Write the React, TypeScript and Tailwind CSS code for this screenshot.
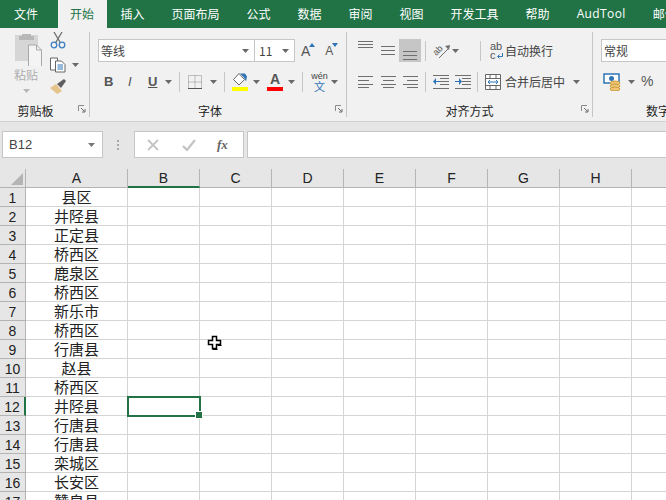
import React from "react";

const CJK = '"Noto Sans CJK SC", "Liberation Sans", sans-serif';

const Caret = ({ c = "#6a6a6a", className = "" }: { c?: string; className?: string }) => (
  <svg width="7" height="4" viewBox="0 0 7 4" className={className}><path d="M0 0h7L3.5 4z" fill={c} /></svg>
);

const Launcher = () => (
  <svg width="8" height="8" viewBox="0 0 8 8" className="absolute right-[3px] bottom-[4px]">
    <path d="M.5 6V.5H6" stroke="#8a8a8a" fill="none" />
    <path d="M3 3l3.5 3.5M7 4v3H4" stroke="#6a6a6a" fill="none" />
  </svg>
);

const Lines = ({ ys, x }: { ys: number[]; x: [number, number][] }) => (
  <svg width="16" height="16" viewBox="0 0 16 16">
    {ys.map((y, i) => (
      <path key={i} d={`M${x[i][0]} ${y + 0.5}H${x[i][1]}`} stroke="#6f6f6f" />
    ))}
  </svg>
);

const tabs = ["文件", "开始", "插入", "页面布局", "公式", "数据", "审阅", "视图", "开发工具", "帮助", "AudTool", "邮件"];

function TabBar() {
  return (
    <div className="flex h-[28px] bg-[#217346] text-[12px] leading-[28px] text-white overflow-hidden whitespace-nowrap">
      {tabs.map((t, i) =>
        i === 0 ? (
          <div key={t} className="shrink-0 w-[58px] pl-[14px]">{t}</div>
        ) : i === 1 ? (
          <div key={t} className="shrink-0 w-[49px] pl-[12px] bg-[#f1f1f1] text-[#217346]">{t}</div>
        ) : t === "AudTool" ? (
          <div key={t} className="shrink-0 px-[13.5px] tracking-[0.4px]" style={{ fontFamily: '"Open Sans", sans-serif' }}>{t}</div>
        ) : (
          <div key={t} className="shrink-0 px-[13.5px]">{t}</div>
        )
      )}
    </div>
  );
}

function Clipboard() {
  return (
    <div className="relative w-[90px] h-[85px] mt-[4px] border-r border-[#c6c6c6] shrink-0">
      <div className="flex">
        <div className="ml-[14px] w-[28px] flex flex-col items-start">
          <svg width="29" height="34" viewBox="0 0 29 34">
            <path d="M1 3h23v26H1z" fill="#d6d6d6" />
            <path d="M8 2h9v2h3v4H5V4h3z" fill="#b8b8b8" />
            <path d="M14.500 13h8l5 5v17h-13z" fill="#f4f4f4" stroke="#a8a8a8" />
            <path d="M22.500 13v5h5" fill="none" stroke="#a8a8a8" />
          </svg>
          <span className="text-[12px] leading-[14px] text-[#adadad] mt-[2px]">粘贴</span>
          <Caret c="#b8b8b8" className="ml-[9px] mt-[7px]" />
        </div>
        <div className="ml-[8px] flex flex-col">
          <svg width="16" height="17" viewBox="0 0 16 17">
            <path d="M4 0l6.500 11M12 0L5.500 11" stroke="#6f6f6f" strokeWidth="1.300" fill="none" />
            <circle cx="4" cy="13" r="2.800" stroke="#3f7fbf" strokeWidth="1.300" fill="none" />
            <circle cx="12" cy="13" r="2.800" stroke="#3f7fbf" strokeWidth="1.300" fill="none" />
          </svg>
          <div className="flex items-center mt-[8px]">
            <svg width="16" height="16" viewBox="0 0 16 16">
              <path d="M.5 1h7v12h-7z" fill="#fff" stroke="#666" />
              <path d="M5.500 4h6l3.500 3.500V15h-9.500z" fill="#fff" stroke="#666" />
              <path d="M7.500 8h5.500M7.500 10h5.500M7.500 12h5.500" stroke="#2f74b5" />
            </svg>
            <Caret className="ml-[6px]" />
          </div>
          <svg width="17" height="16" viewBox="0 0 17 16" className="mt-[6px]">
            <path d="M0 9l6-4 6 7-5 3q-3-3-7-6z" fill="#e5c48a" />
            <path d="M7 5l7-5 2 2-5 7z" fill="#5f5f5f" />
          </svg>
        </div>
      </div>
      <div className="absolute left-0 right-[18px] top-[71px] text-center text-[12px] leading-[16px] text-[#222]">剪贴板</div>
      <Launcher />
    </div>
  );
}

function FontGroup() {
  return (
    <div className="relative w-[257px] h-[85px] mt-[4px] border-r border-[#c6c6c6] shrink-0">
      <div className="flex mt-[7px] ml-[8px] h-[23px] items-center">
        <div className="flex items-center w-[157px] h-[23px] bg-white border border-[#c6c6c6] text-[12px] text-[#444] pl-[2px]">
          等线
          <Caret className="ml-auto mr-[5px]" />
        </div>
        <div className="flex items-center w-[40px] h-[23px] bg-white border border-l-0 border-[#c6c6c6] text-[12px] text-[#444] pl-[4px]">
          11
          <Caret className="ml-auto mr-[5px]" />
        </div>
        <span className="relative ml-[6px] text-[14px] leading-[16px] text-[#555]" style={{ fontFamily: '"Liberation Sans", sans-serif' }}>
          A
          <svg width="6" height="4" viewBox="0 0 6 4" className="absolute -right-[5px] top-0"><path d="M0 4h6L3 0z" fill="#2f74b5" /></svg>
        </span>
        <span className="relative ml-[15px] text-[12px] leading-[16px] text-[#555]" style={{ fontFamily: '"Liberation Sans", sans-serif' }}>
          A
          <svg width="6" height="4" viewBox="0 0 6 4" className="absolute -right-[5px] top-0"><path d="M0 0h6L3 4z" fill="#2f74b5" /></svg>
        </span>
      </div>
      <div className="flex items-center mt-[8px] h-[23px] ml-[14px] text-[#555]" style={{ fontFamily: '"Liberation Sans", sans-serif' }}>
        <span className="w-[24px] text-[13px] font-bold">B</span>
        <span className="w-[20px] text-[13px] italic">I</span>
        <span className="w-[17px] text-[13px] underline font-bold">U</span>
        <Caret />
        <div className="w-px h-[20px] bg-[#c6c6c6] ml-[7px]" />
        <svg width="14" height="14" viewBox="0 0 14 14" className="ml-[8px]">
          <path d="M.5.500h13v13h-13zM7 .5v13M.5 7h13" stroke="#8a8a8a" strokeDasharray="1 1" fill="none" />
          <path d="M0 13.500h14" stroke="#555" />
        </svg>
        <Caret className="ml-[8px]" />
        <div className="w-px h-[20px] bg-[#c6c6c6] ml-[7px]" />
        <div className="ml-[7px] flex flex-col w-[16px]">
          <svg width="16" height="13" viewBox="0 0 16 13">
            <path d="M7 .5L1.500 6.500 7 12l5.500-5.500z" fill="#fff" stroke="#666" />
            <path d="M8 .5h5l2 3-1 5-2-4z" fill="#2f74b5" />
          </svg>
          <div className="h-[4px] bg-[#ffff00] mt-[1px]" />
        </div>
        <Caret className="ml-[5px]" />
        <div className="ml-[7px] flex flex-col items-center w-[16px]">
          <span className="text-[14px] leading-[13px] font-bold">A</span>
          <div className="w-full h-[4px] bg-[#ff0000] mt-[1px]" />
        </div>
        <Caret className="ml-[5px]" />
        <div className="w-px h-[20px] bg-[#c6c6c6] ml-[7px]" />
        <div className="ml-[8px] flex flex-col items-center w-[17px] leading-none">
          <span className="text-[9px] leading-[9px] text-[#444]">wén</span>
          <span className="text-[11px] leading-[11px] text-[#2f74b5]" style={{ fontFamily: CJK }}>文</span>
        </div>
        <Caret className="ml-[3px]" />
      </div>
      <div className="absolute left-0 right-[16px] top-[71px] text-center text-[12px] leading-[16px] text-[#222]">字体</div>
      <Launcher />
    </div>
  );
}

function AlignGroup() {
  const iconArrow = (flip: boolean) => (
    <svg width="16" height="14" viewBox="0 0 16 14">
      <path d="M0 .5h16M7 3.500h9M7 6.500h9M7 9.500h9M0 13.500h16" stroke="#6f6f6f" fill="none" />
      {flip ? <path d="M0 6h4V3l3 3.500L4 10V7H0z" fill="#2f74b5" /> : <path d="M7 6H3V3L0 6.500 3 10V7h4z" fill="#2f74b5" />}
    </svg>
  );
  return (
    <div className="relative w-[246px] h-[85px] mt-[4px] border-r border-[#c6c6c6] shrink-0">
      <div className="flex items-center mt-[7px] h-[23px] ml-[11px]">
        <div className="w-[23px] h-[23px] flex"><Lines ys={[2, 5, 8]} x={[[0, 15], [0, 15], [0, 15]]} /></div>
        <div className="w-[18px] h-[23px] flex items-center"><Lines ys={[3, 7, 11]} x={[[0, 14], [0, 14], [0, 14]]} /></div>
        <div className="w-[22px] h-[23px] bg-[#c6c6c6] flex items-end justify-center pb-[1px]"><Lines ys={[6, 10, 14]} x={[[1, 15], [1, 15], [1, 15]]} /></div>
        <div className="w-px h-[20px] bg-[#c6c6c6] ml-[4px]" />
        <svg width="17" height="16" viewBox="0 0 17 16" className="ml-[7px]">
          <path d="M6 15l9-9" stroke="#6f6f6f" fill="none" />
          <path d="M12 3l5-1-1 5z" fill="#6f6f6f" />
          <text x="0" y="11" fontSize="9" fill="#555" transform="rotate(-45 4 8)" fontFamily="Liberation Sans">ab</text>
        </svg>
        <Caret className="ml-[2px]" />
        <div className="w-px h-[20px] bg-[#c6c6c6] ml-[21px]" />
        <div className="relative ml-[9px] w-[15px] flex flex-col leading-[9px] text-[#555]" style={{ fontFamily: '"Liberation Sans", sans-serif' }}>
          <span className="text-[11px]">ab</span>
          <span className="text-[11px]">c</span>
          <svg width="7" height="6" viewBox="0 0 7 6" className="absolute left-[6px] top-[11px]"><path d="M6.500 0v3.500H2M3.500 1.500L1.500 3.500l2 2" stroke="#2f74b5" fill="none" /></svg>
        </div>
        <span className="text-[12px] text-[#444]">自动换行</span>
      </div>
      <div className="flex items-center mt-[8px] h-[23px] ml-[11px]">
        <div className="w-[23px] flex"><Lines ys={[2, 6, 10, 13]} x={[[0, 15], [0, 11], [0, 15], [0, 11]]} /></div>
        <div className="w-[22px] flex"><Lines ys={[2, 6, 10, 13]} x={[[0, 15], [2, 13], [0, 15], [2, 13]]} /></div>
        <div className="w-[18px] flex"><Lines ys={[2, 6, 10, 13]} x={[[0, 15], [4, 15], [0, 15], [4, 15]]} /></div>
        <div className="w-px h-[20px] bg-[#c6c6c6] ml-[4px]" />
        <div className="ml-[7px] flex gap-[6px]">{iconArrow(false)}{iconArrow(true)}</div>
        <div className="w-px h-[20px] bg-[#c6c6c6] ml-[6px]" />
        <svg width="16" height="16" viewBox="0 0 16 16" className="ml-[7px]">
          <path d="M.5.500h15v15H.5zM.5 4.500h15M.5 11.500h15M5 .5v4M11 .5v4M5 11.500v4M11 11.500v4" stroke="#666" fill="#fff" />
          <path d="M3 8h10" stroke="#2f74b5" />
          <path d="M5 6L3 8l2 2M11 6l2 2-2 2" stroke="#2f74b5" fill="none" />
        </svg>
        <span className="ml-[4px] text-[12px] text-[#444] w-[68px]">合并后居中</span>
        <Caret />
      </div>
      <div className="absolute left-0 right-0 top-[71px] text-center text-[12px] leading-[16px] text-[#222]">对齐方式</div>
      <Launcher />
    </div>
  );
}

function NumberGroup() {
  return (
    <div className="relative flex-1 h-[85px] mt-[4px] overflow-hidden whitespace-nowrap">
      <div className="mt-[7px] ml-[8px] h-[23px] w-[80px] bg-white border border-[#c6c6c6] pl-[2px] text-[12px] leading-[21px] text-[#444]">常规</div>
      <div className="flex items-center mt-[8px] h-[23px] ml-[10px]">
        <svg width="19" height="18" viewBox="0 0 19 18">
          <path d="M1 1h15v9H1z" fill="#fff" stroke="#2f74b5" strokeWidth="1.500" />
          <circle cx="8.500" cy="5.500" r="2.500" fill="#2f74b5" />
          <ellipse cx="12" cy="10" rx="5" ry="2" fill="#f0c674" stroke="#c89b3c" />
          <ellipse cx="12" cy="13" rx="5" ry="2" fill="#f0c674" stroke="#c89b3c" />
          <ellipse cx="12" cy="16" rx="5" ry="2" fill="#f0c674" stroke="#c89b3c" />
        </svg>
        <Caret className="ml-[6px]" />
        <span className="ml-[6px] text-[14px] text-[#555]" style={{ fontFamily: '"Liberation Sans", sans-serif' }}>%</span>
      </div>
      <div className="absolute left-[25px] top-[71px] w-[80px] text-center text-[12px] leading-[16px] text-[#222]">数字</div>
    </div>
  );
}

function FormulaBar() {
  return (
    <div className="flex h-[48px] bg-[#e6e6e6] pt-[9px] pl-[2px] border-t border-[#d2d2d2]">
      <div className="flex items-center w-[101px] h-[27px] bg-white border border-[#c6c6c6] pl-[6px] text-[13px] text-[#444]" style={{ fontFamily: '"Liberation Sans", sans-serif' }}>
        B12
        <Caret c="#777" className="ml-auto mr-[7px]" />
      </div>
      <div className="w-[31px] h-[27px] flex flex-col items-center justify-center gap-[2px] pr-[1px]">
        <i className="w-[2px] h-[2px] bg-[#a8a8a8]" /><i className="w-[2px] h-[2px] bg-[#a8a8a8]" /><i className="w-[2px] h-[2px] bg-[#a8a8a8]" />
      </div>
      <div className="flex items-center w-[110px] h-[27px] bg-white border border-[#c6c6c6] mr-[3px]">
        <svg width="12" height="12" viewBox="0 0 12 12" className="ml-[12px]"><path d="M1 1l10 10M11 1L1 11" stroke="#c4c4c4" strokeWidth="1.800" /></svg>
        <svg width="14" height="12" viewBox="0 0 14 12" className="ml-[23px]"><path d="M1 7l4 4 8-10" stroke="#c4c4c4" strokeWidth="2.200" fill="none" /></svg>
        <span className="ml-[21px] text-[13px] italic font-bold text-[#666]" style={{ fontFamily: '"Liberation Serif", serif' }}>fx</span>
      </div>
      <div className="flex-1 h-[27px] bg-white border border-[#c6c6c6] border-r-0" />
    </div>
  );
}

const counties = ["县区", "井陉县", "正定县", "桥西区", "鹿泉区", "桥西区", "新乐市", "桥西区", "行唐县", "赵县", "桥西区", "井陉县", "行唐县", "行唐县", "栾城区", "长安区", "赞皇县"];
const cols = ["B", "C", "D", "E", "F", "G", "H", "I"];

function Sheet() {
  return (
    <div className="grid grid-cols-[26px_102px_repeat(8,72px)] auto-rows-[19px] text-[#222] bg-white">
      <div className="h-[19px] bg-[#e6e6e6] border-r border-b border-[#b4b4b4] flex items-end justify-end p-[2px]">
        <svg width="12" height="12" viewBox="0 0 12 12"><path d="M12 0v12H0z" fill="#b4b4b4" /></svg>
      </div>
      <div className="h-[19px] bg-[#e6e6e6] border-r border-b border-[#b4b4b4] text-center text-[14px] leading-[19px]" style={{ fontFamily: '"Liberation Sans", sans-serif' }}>A</div>
      {cols.map((c) => (
        <div key={c} className={`h-[19px] bg-[#e6e6e6] border-r text-center text-[14px] leading-[19px] ${c === "B" ? "border-b-2 border-b-[#217346] border-r-[#b4b4b4]" : "border-b border-[#b4b4b4]"}`} style={{ fontFamily: '"Liberation Sans", sans-serif' }}>{c}</div>
      ))}
      {counties.map((name, r) => (
        <React.Fragment key={r}>
          <div className={`bg-[#e6e6e6] border-b border-[#b4b4b4] text-center text-[14px] leading-[20px] ${r === 11 ? "border-r-2 border-r-[#217346]" : "border-r"}`} style={{ fontFamily: '"Liberation Sans", sans-serif' }}>{r + 1}</div>
          <div className="border-r border-b border-[#d4d4d4] text-center text-[15px] leading-[18px] whitespace-nowrap">{name}</div>
          {cols.map((c) => (
            <div key={c} className="relative border-r border-b border-[#d4d4d4]">
              {c === "B" && r === 11 && (
                <div className="absolute -left-px -top-px w-[74px] h-[21px] border-2 border-[#217346] z-10">
                  <div className="absolute -right-[3px] -bottom-[3px] w-[6px] h-[6px] bg-[#217346] border border-white box-content -m-px" />
                </div>
              )}
            </div>
          ))}
        </React.Fragment>
      ))}
    </div>
  );
}

export default function App() {
  return (
    <div className="relative w-[666px] h-[500px] overflow-hidden bg-white" style={{ fontFamily: CJK }}>
      <TabBar />
      <div className="flex h-[93px] bg-[#f1f1f1]">
        <Clipboard />
        <FontGroup />
        <AlignGroup />
        <NumberGroup />
      </div>
      <FormulaBar />
      <Sheet />
      <svg width="16" height="16" viewBox="0 0 16 16" className="absolute left-[207px] top-[335px] z-20">
        <path d="M5.500 1.500h4v4h4v4h-4v4h-4v-4h-4v-4h4z" fill="#fff" stroke="#000" strokeWidth="1.500" />
        <path d="M10.500 14.500h-5M14.500 10.500h-4" stroke="#000" strokeWidth="1" />
      </svg>
    </div>
  );
}
